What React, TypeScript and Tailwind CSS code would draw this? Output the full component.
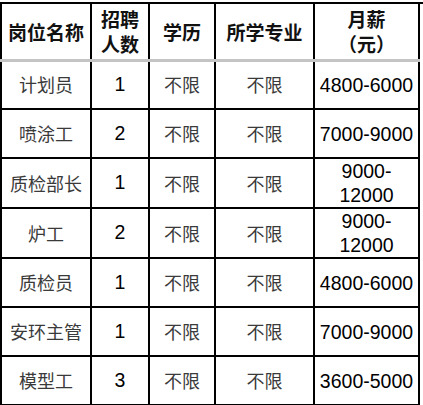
import React from "react";

const rows: [string, string, string, string, string[]][] = [
  ["计划员", "1", "不限", "不限", ["4800-6000"]],
  ["喷涂工", "2", "不限", "不限", ["7000-9000"]],
  ["质检部长", "1", "不限", "不限", ["9000-", "12000"]],
  ["炉工", "2", "不限", "不限", ["9000-", "12000"]],
  ["质检员", "1", "不限", "不限", ["4800-6000"]],
  ["安环主管", "1", "不限", "不限", ["7000-9000"]],
  ["模型工", "3", "不限", "不限", ["3600-5000"]],
];

const cjk = { fontFamily: '"Noto Sans CJK SC", sans-serif' };
const num = { fontFamily: '"Liberation Sans", Arial, sans-serif' };

export default function App() {
  return (
    <div className="w-[423px] h-[405px] bg-white overflow-hidden pt-[2px]">
      <div className="border-t-2 border-black w-full">
        <table className="border-collapse table-fixed w-[418px] -mt-[2px]" style={cjk}>
          <colgroup>
            <col className="w-[90px]" />
            <col className="w-[58px]" />
            <col className="w-[66px]" />
            <col className="w-[99px]" />
            <col className="w-[105px]" />
          </colgroup>
          <thead>
            <tr className="h-[57px]">
              {[["岗位名称"], ["招聘", "人数"], ["学历"], ["所学专业"], ["月薪", "（元）"]].map((h, i) => (
                <th
                  key={i}
                  className="border-2 border-black border-b-[3px] border-b-[#c4c4c4] p-0 text-center align-middle text-[19px] font-bold text-[#111] leading-[25px]"
                >
                  {h.map((l, j) => (
                    <div key={j}>{l}</div>
                  ))}
                </th>
              ))}
            </tr>
          </thead>
          <tbody>
            {rows.map((r, i) => (
              <tr key={i} className="h-[49px]">
                <td className="border-2 border-black p-0 text-center align-middle text-[18px] text-[#3a3a3a]">{r[0]}</td>
                <td className="border-2 border-black p-0 text-center align-middle text-[19.5px] text-black" style={num}>{r[1]}</td>
                <td className="border-2 border-black p-0 text-center align-middle text-[18px] text-[#3a3a3a]">{r[2]}</td>
                <td className="border-2 border-black p-0 text-center align-middle text-[18px] text-[#3a3a3a]">{r[3]}</td>
                <td className="border-2 border-black p-0 text-center align-middle text-[19.5px] text-black leading-[24px]" style={num}>
                  {r[4].map((l, j) => (
                    <div key={j}>{l}</div>
                  ))}
                </td>
              </tr>
            ))}
          </tbody>
        </table>
      </div>
    </div>
  );
}
